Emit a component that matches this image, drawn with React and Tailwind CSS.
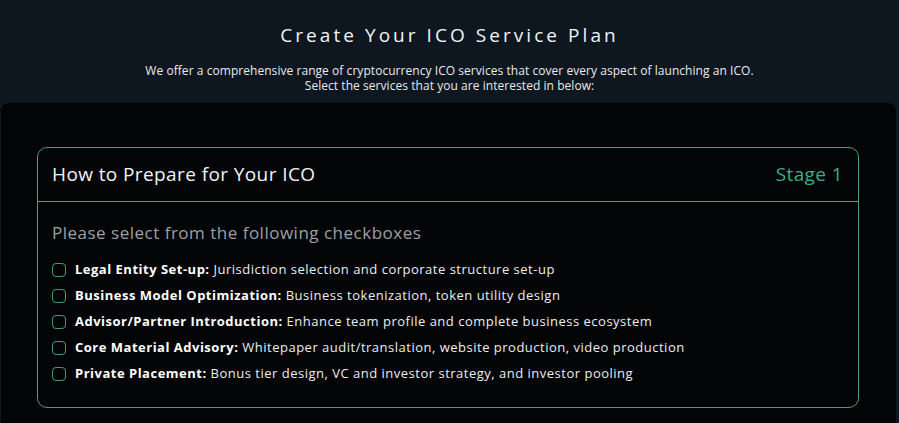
import React from "react";

const items = [
  ["Legal Entity Set-up:", "Jurisdiction selection and corporate structure set-up"],
  ["Business Model Optimization:", "Business tokenization, token utility design"],
  ["Advisor/Partner Introduction:", "Enhance team profile and complete business ecosystem"],
  ["Core Material Advisory:", "Whitepaper audit/translation, website production, video production"],
  ["Private Placement:", "Bonus tier design, VC and investor strategy, and investor pooling"],
];

export default function App() {
  return (
    <div
      className="w-full h-[423px] overflow-hidden bg-[#0e1620] flex flex-col"
      style={{ fontFamily: '"Open Sans", "Liberation Sans", sans-serif' }}
    >
      <div className="pt-[22px] text-center">
        <h1 className="text-[19px] leading-[26px] tracking-[3.05px] text-[#f1f3f5]">
          Create Your ICO Service Plan
        </h1>
        <p className="mt-[15px] text-[12px] leading-[15px] tracking-[0.05px] text-[#e8eaec]">
          We offer a comprehensive range of cryptocurrency ICO services that cover every aspect of launching an ICO.
          <br />
          Select the services that you are interested in below:
        </p>
      </div>
      <div className="mt-[10px] ml-[1px] mr-[3px] flex-1 bg-[#030405] rounded-t-[8px] pt-[44px] pl-[36px] pr-[37px]">
        <div className="border border-[#42a07a] rounded-[10px]">
          <div className="h-[54px] pl-[14px] pr-[15px] flex items-center justify-between border-b border-[#42a07a]">
            <span className="text-[19px] tracking-[0.4px] text-[#f1f3f5]">How to Prepare for Your ICO</span>
            <span className="text-[19px] tracking-[0.4px] text-[#3bae88]">Stage 1</span>
          </div>
          <div className="px-[14px] pt-[19px] pb-[20px]">
            <div className="text-[17px] leading-[24px] tracking-[0.5px] text-[#9ca1a7]">
              Please select from the following checkboxes
            </div>
            <div className="mt-[12px] flex flex-col">
              {items.map(([b, t]) => (
                <div key={b} className="h-[26px] flex items-center gap-[9px] text-[13px] tracking-[0.5px] text-[#eceef0]">
                  <span className="w-[14px] h-[14px] rounded-[4px] border border-[#3f9b76] shrink-0" />
                  <span>
                    <b className="font-bold text-white">{b}</b> {t}
                  </span>
                </div>
              ))}
            </div>
          </div>
        </div>
      </div>
    </div>
  );
}
